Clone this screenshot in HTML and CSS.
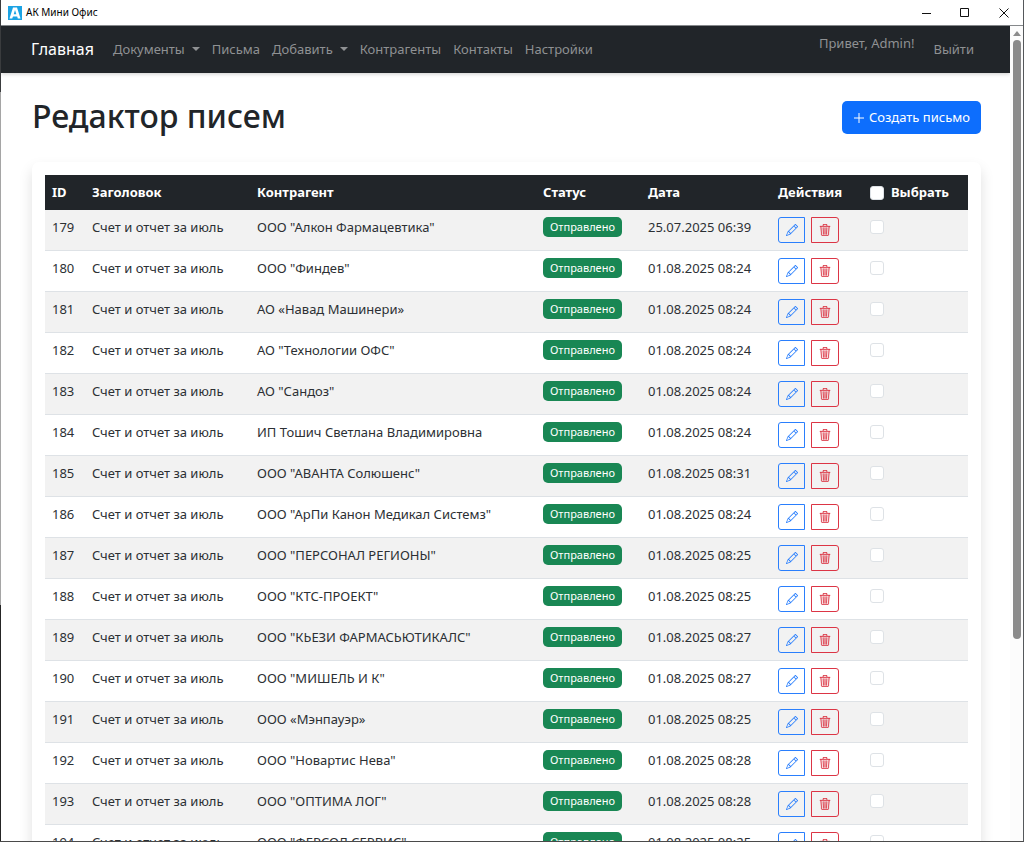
FILE: index.html
```
<!DOCTYPE html>
<html lang="ru">
<head>
<meta charset="utf-8">
<title>АК Мини Офис</title>
<link rel="stylesheet" href="styles.css">
</head>
<body>
<svg class="sprite" aria-hidden="true">
  <symbol id="pencil" viewBox="0 0 16 16"><path d="M12.146.146a.5.5 0 0 1 .708 0l3 3a.5.5 0 0 1 0 .708l-10 10a.5.5 0 0 1-.168.11l-5 2a.5.5 0 0 1-.65-.65l2-5a.5.5 0 0 1 .11-.168zM11.207 2.5 13.5 4.793 14.793 3.5 12.5 1.207zm1.586 3L10.5 3.207 4 9.707V10h.5a.5.5 0 0 1 .5.5v.5h.5a.5.5 0 0 1 .5.5v.5h.293zm-9.761 5.175-.106.106-1.528 3.821 3.821-1.528.106-.106A.5.5 0 0 1 5 12.5V12h-.5a.5.5 0 0 1-.5-.5V11h-.5a.5.5 0 0 1-.468-.325"/></symbol>
  <symbol id="trash" viewBox="0 0 16 16"><path d="M6.5 1h3a.5.5 0 0 1 .5.5v1H6v-1a.5.5 0 0 1 .5-.5M11 2.5v-1A1.5 1.5 0 0 0 9.5 0h-3A1.5 1.5 0 0 0 5 1.5v1H1.5a.5.5 0 0 0 0 1h.538l.853 10.66A2 2 0 0 0 4.885 16h6.23a2 2 0 0 0 1.994-1.84l.853-10.66h.538a.5.5 0 0 0 0-1zm1.958 1-.846 10.58a1 1 0 0 1-.997.92h-6.23a1 1 0 0 1-.997-.92L3.042 3.500zm-7.487 1a.5.5 0 0 1 .528.47l.5 8.500a.5.5 0 0 1-.998.06L5 5.030a.5.5 0 0 1 .47-.53Zm5.058 0a.5.5 0 0 1 .47.53l-.5 8.500a.5.5 0 1 1-.998-.06l.5-8.500a.5.5 0 0 1 .528-.47M8 4.500a.5.5 0 0 1 .5.5v8.500a.5.5 0 0 1-1 0V5a.5.5 0 0 1 .5-.5"/></symbol>
</svg>
<div class="window">
  <header class="titlebar">
    <svg class="app-icon" viewBox="0 0 14 14" aria-hidden="true"><rect width="14" height="14" fill="#1ba3e4"/><path d="M1.500 12.500 5 1.500h4l3.500 11H9.800L9.200 10.500H5L4.200 12.500zM5.700 8.300h2.700L7 4z" fill="#fff" fill-rule="evenodd"/></svg>
    <span class="app-name">АК Мини Офис</span>
    <div class="window-controls">
      <button type="button" aria-label="Свернуть"><svg viewBox="0 0 10 10"><path d="M1 5.500h9"/></svg></button>
      <button type="button" aria-label="Развернуть"><svg viewBox="0 0 10 10"><path d="M.5.5h8v8h-8z"/></svg></button>
      <button type="button" aria-label="Закрыть"><svg viewBox="0 0 10 10"><path d="M.5.5l9 9M9.500.5l-9 9"/></svg></button>
    </div>
  </header>
  <div class="viewport">
    <div class="page">
      <nav class="navbar">
        <a class="brand" href="#">Главная</a>
        <a class="nav-link dropdown" href="#">Документы</a>
        <a class="nav-link" href="#">Письма</a>
        <a class="nav-link dropdown" href="#">Добавить</a>
        <a class="nav-link" href="#">Контрагенты</a>
        <a class="nav-link" href="#">Контакты</a>
        <a class="nav-link" href="#">Настройки</a>
        <span class="greeting">Привет, Admin!</span>
        <a class="nav-link" href="#">Выйти</a>
      </nav>
      <main class="content">
        <div class="page-head">
          <h1>Редактор писем</h1>
          <button type="button" class="create"><svg viewBox="0 0 12 12" aria-hidden="true"><path d="M6 1v10M1 6h10"/></svg>Создать письмо</button>
        </div>
        <section class="card">
          <table class="letters">
            <thead>
              <tr>
                <th class="col-id">ID</th>
                <th class="col-title">Заголовок</th>
                <th class="col-party">Контрагент</th>
                <th class="col-status">Статус</th>
                <th class="col-date">Дата</th>
                <th class="col-actions">Действия</th>
                <th class="col-select"><label><input type="checkbox" class="check">Выбрать</label></th>
              </tr>
            </thead>
            <tbody id="rows"></tbody>
          </table>
        </section>
      </main>
    </div>
    <div class="scrollbar" aria-hidden="true">
      <svg viewBox="0 0 8 5"><path d="M4 0l4 5H0z"/></svg>
      <div class="thumb"></div>
    </div>
  </div>
</div>
<script src="letters.js"></script>
</body>
</html>
```
FILE: styles.css
```
* { box-sizing: border-box; }

body {
  margin: 0;
  font: 13px/21px "Noto Sans", "Open Sans", sans-serif;
  color: #212529;
  background: #fff;
}

a { text-decoration: none; }
button { font: inherit; cursor: pointer; }
.sprite { display: none; }

.window {
  height: 100vh;
  display: flex;
  flex-direction: column;
  overflow: hidden;
  padding-left: 1px;
  border-right: 1px solid #55585b;
  border-bottom: 1px solid #4a4a4a;
  background: linear-gradient(#3a3c3e 0 92px, #a5a5a5 92px 605px, #252525 605px) left / 1px 100% no-repeat;
}

.titlebar {
  flex: none;
  height: 26px;
  display: flex;
  align-items: center;
  padding-left: 7px;
  border-bottom: 1px solid #85888b;
}
.app-icon { width: 14px; height: 14px; }
.app-name { margin-left: 4px; font-size: 10px; color: #000; }
.window-controls { display: flex; margin-left: auto; }
.window-controls button {
  width: 39px;
  height: 24px;
  padding: 0;
  border: 0;
  background: none;
  display: grid;
  place-items: center;
}
.window-controls svg { width: 10px; height: 10px; fill: none; stroke: #111; }

.viewport { flex: 1; min-height: 0; display: flex; }
.page { flex: 1; min-width: 0; overflow: hidden; }

.navbar {
  height: 47px;
  display: flex;
  align-items: center;
  padding: 0 30px;
  background: #212529;
  box-shadow: 0 1px 4px rgba(0, 0, 0, .2);
}
.brand { margin-right: 13px; font-size: 16px; color: #fff; }
.nav-link { padding: 6px; color: #8f9193; }
.dropdown::after {
  content: "";
  display: inline-block;
  margin-left: 7px;
  vertical-align: 3px;
  border: 4px solid transparent;
  border-top-color: currentColor;
  border-bottom: 0;
}
.greeting { align-self: flex-start; margin: 7px 13px 0 auto; color: #8f9193; }

.content { padding: 28px 29px 0 31px; }
.page-head { display: flex; align-items: flex-start; justify-content: space-between; margin-bottom: 28px; }
h1 { margin: 0; font-size: 32px; line-height: 30px; font-weight: 500; }
.create {
  display: flex;
  align-items: center;
  gap: 4px;
  height: 33px;
  padding: 0 11px;
  border: 0;
  border-radius: 5px;
  color: #fff;
  background: #0d6efd;
}
.create svg { width: 12px; height: 12px; fill: none; stroke: #fff; }

.card {
  padding: 13px;
  border-radius: 7px;
  background: #fff;
  box-shadow: 0 7px 14px rgba(0, 0, 0, .13);
}

.letters { width: 100%; border-collapse: separate; border-spacing: 0; table-layout: fixed; }
.letters th { height: 35px; padding: 0 7px; text-align: left; color: #fff; background: #212529; }
.letters td { height: 41px; padding: 7px 7px 0; vertical-align: top; border-bottom: 1px solid #dee2e6; white-space: nowrap; color: #2c3034; }
.letters tbody tr:nth-child(odd) { background: #f2f2f2; }
.col-id { width: 40px; }
.col-title { width: 165px; }
.col-status { width: 105px; }
.col-date { width: 130px; }
.col-actions { width: 92px; }
.col-select { width: 105px; }
.col-select label { display: flex; align-items: center; gap: 7px; }

.badge {
  display: block;
  width: max-content;
  padding: 0 7px;
  border-radius: 5px;
  font-size: 11px;
  line-height: 20px;
  color: #fff;
  background: #198754;
}

.actions { display: flex; gap: 6px; }
.action {
  width: 27px;
  height: 26px;
  padding: 0;
  display: grid;
  place-items: center;
  border: 1px solid;
  background: none;
}
.action svg { width: 12px; height: 12px; fill: currentColor; }
.edit { color: #2a7ffd; border-radius: 3px 0 0 3px; }
.remove { width: 28px; color: #dc3545; border-radius: 0 3px 3px 0; }
.remove svg { stroke: currentColor; stroke-width: .3; }

.check {
  appearance: none;
  display: block;
  width: 14px;
  height: 14px;
  margin: 0;
  border: 1px solid #dee2e6;
  border-radius: 3px;
  background: #fff;
}
.letters td .check { margin-top: 3px; }

.scrollbar {
  flex: none;
  width: 13px;
  display: flex;
  flex-direction: column;
  align-items: center;
  gap: 4px;
  padding-top: 5px;
  background: #fcfcfc;
}
.scrollbar svg { flex: none; width: 8px; height: 5px; fill: #8b8b8b; }
.thumb { width: 8px; height: 74%; border-radius: 4px; background: #8b8b8b; }
```
FILE: letters.js
```
const letters = [
  [179, 'ООО "Алкон Фармацевтика"', '25.07.2025 06:39'],
  [180, 'ООО "Финдев"', '01.08.2025 08:24'],
  [181, 'АО «Навад Машинери»', '01.08.2025 08:24'],
  [182, 'АО "Технологии ОФС"', '01.08.2025 08:24'],
  [183, 'АО "Сандоз"', '01.08.2025 08:24'],
  [184, 'ИП Тошич Светлана Владимировна', '01.08.2025 08:24'],
  [185, 'ООО "АВАНТА Солюшенс"', '01.08.2025 08:31'],
  [186, 'ООО "АрПи Канон Медикал Системз"', '01.08.2025 08:24'],
  [187, 'ООО "ПЕРСОНАЛ РЕГИОНЫ"', '01.08.2025 08:25'],
  [188, 'ООО "КТС-ПРОЕКТ"', '01.08.2025 08:25'],
  [189, 'ООО "КЬЕЗИ ФАРМАСЬЮТИКАЛС"', '01.08.2025 08:27'],
  [190, 'ООО "МИШЕЛЬ И К"', '01.08.2025 08:27'],
  [191, 'ООО «Мэнпауэр»', '01.08.2025 08:25'],
  [192, 'ООО "Новартис Нева"', '01.08.2025 08:28'],
  [193, 'ООО "ОПТИМА ЛОГ"', '01.08.2025 08:28'],
  [194, 'ООО "ФЕРСОЛ СЕРВИС"', '01.08.2025 08:25']
];

document.getElementById('rows').innerHTML = letters.map(([id, party, date]) => `
  <tr>
    <td>${id}</td>
    <td>Счет и отчет за июль</td>
    <td>${party}</td>
    <td><span class="badge">Отправлено</span></td>
    <td>${date}</td>
    <td><div class="actions">
      <button type="button" class="action edit" aria-label="Изменить ${id}"><svg><use href="#pencil"/></svg></button>
      <button type="button" class="action remove" aria-label="Удалить ${id}"><svg><use href="#trash"/></svg></button>
    </div></td>
    <td><input type="checkbox" class="check" aria-label="Выбрать ${id}"></td>
  </tr>`).join('');
```
